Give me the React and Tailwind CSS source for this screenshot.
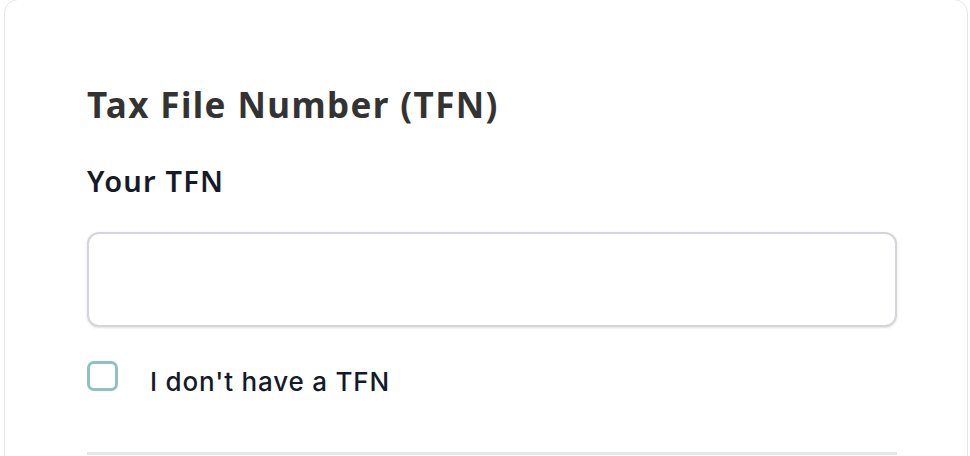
export default function App() {
  return (
    <div className="w-[970px] h-[456px] bg-white overflow-hidden">
      <div className="ml-[4px] mr-[2px] mt-[-1px] h-[500px] rounded-[14px] border border-[#e6e6ea] bg-white pl-[82px] pr-[70px] pt-[80px]">
        <h2 className="text-[#333333] text-[35px] font-bold leading-[50px] tracking-[1.4px]" style={{ fontFamily: "'Noto Sans', sans-serif" }}>
          Tax File Number (TFN)
        </h2>
        <label className="block mt-[34px] text-[#151a2b] text-[29px] font-semibold leading-[34px] tracking-[1.2px]" style={{ fontFamily: "'Noto Sans', sans-serif" }}>
          Your TFN
        </label>
        <input type="text" className="mt-[34px] block w-full h-[95px] rounded-[12px] border-2 border-[#d4d6dc] bg-white shadow-sm outline-none" />
        <div className="mt-[34px] flex items-start">
          <span className="w-[31px] h-[30px] rounded-[7px] border-[3px] border-[#8bc3bf] bg-white" />
          <span className="ml-[32px] mt-[4px] text-[#151a2b] text-[26px] font-medium leading-[34px] tracking-[0.8px]" style={{ fontFamily: "Inter, 'Noto Sans', sans-serif" }}>
            I don't have a TFN
          </span>
        </div>
        <div className="mt-[53px] h-[3px] bg-[#e5e6ea]" />
      </div>
    </div>
  );
}
